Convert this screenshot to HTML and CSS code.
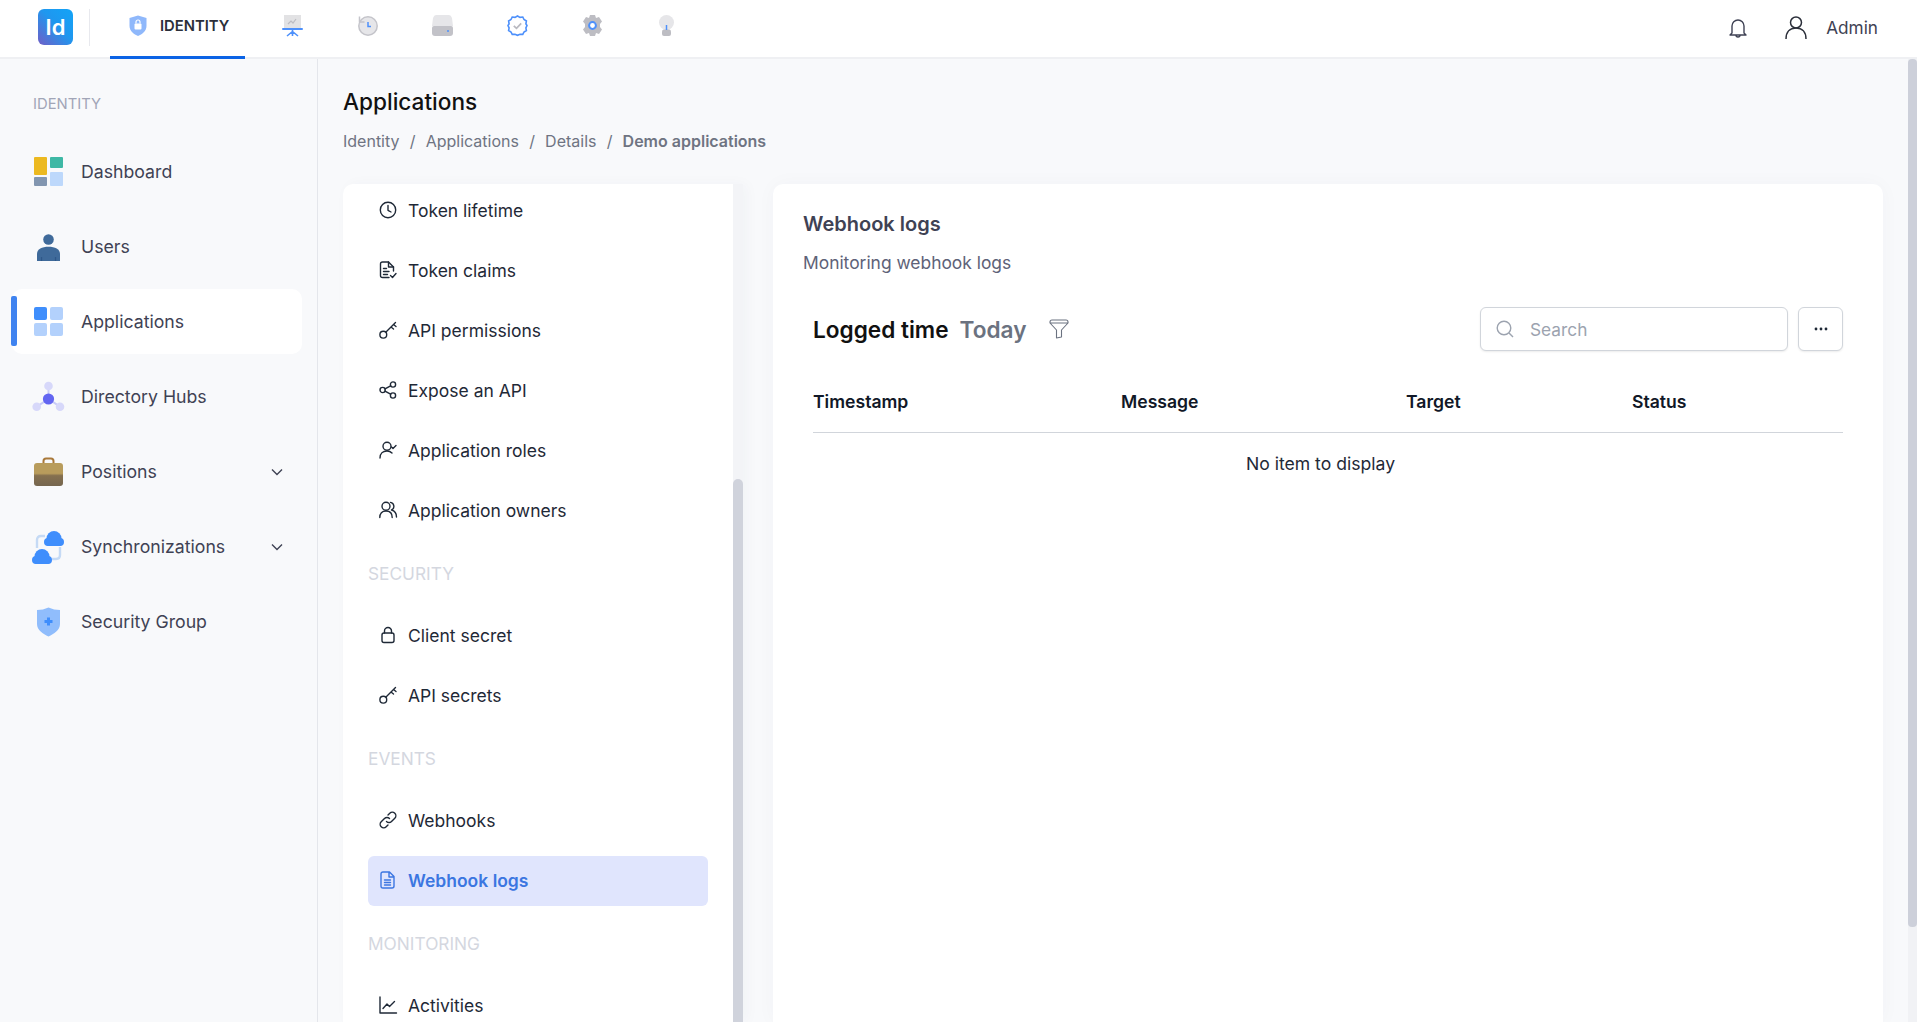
FILE: index.html
```html
<!DOCTYPE html>
<html lang="en">
<head>
<meta charset="utf-8">
<title>Applications</title>
<link rel="stylesheet" href="styles.css">
</head>
<body>
<div class="app">
  <header class="topbar">
    <div class="logo">Id</div>
    <div class="top-divider"></div>
    <a class="tab">
      <svg class="tab-shield" viewBox="0 0 18 21"><path d="M9 0.5 L17.5 3 V11 C17.5 16 13 19.5 9 21 C5 19.5 0.5 16 0.5 11 V3 Z" fill="#8fb8fb"/><rect x="5.5" y="8.5" width="7" height="6" rx="1" fill="#fff"/><path d="M7 8.5 V7 a2 2 0 0 1 4 0 V8.5" fill="none" stroke="#fff" stroke-width="1.2"/></svg>
      <span>IDENTITY</span>
    </a>
    <nav class="top-icons">
      <svg class="top-icon" viewBox="0 0 21 21"><rect x="2" y="0" width="17" height="13" fill="#e2e2e4"/><path d="M6 9 L9 6 L11 8 L14 4" fill="none" stroke="#bcbcc2" stroke-width="1.2"/><rect x="0" y="13" width="21" height="2" rx="1" fill="#4d90fb"/><path d="M10.5 15 V21 M10.5 16.5 L5 21 M10.5 16.5 L16 21" stroke="#4d90fb" stroke-width="1.6" fill="none"/></svg>
      <svg class="top-icon" viewBox="0 0 21 21"><circle cx="11" cy="11" r="9.2" fill="#e6e6e9" stroke="#c4c4ca" stroke-width="1.5"/><path d="M2.5 7 V1.5 M2.5 7 H7.5" stroke="#c4c4ca" stroke-width="1.5" fill="none"/><path d="M11 7 V11.5 H14" stroke="#4d90fb" stroke-width="1.5" fill="none"/></svg>
      <svg class="top-icon" viewBox="0 0 21 21"><path d="M4 0 H17 Q19 0 20 3 L21 11 H0 L1 3 Q2 0 4 0 Z" fill="#e6e6e9"/><path d="M0 13 Q0 11 2 11 H19 Q21 11 21 13 V18 Q21 21 18 21 H3 Q0 21 0 18 Z" fill="#c2c2c8"/><circle cx="16" cy="16" r="1" fill="#4d90fb"/></svg>
      <svg class="top-icon" viewBox="0 0 21 21"><path d="M10.5 1 L13 2.4 L15.8 2 L17 4.5 L19.4 6 L18.9 8.8 L20 10.5 L18.9 12.9 L19.4 15.5 L17 17 L15.8 19.4 L13 19.2 L10.5 20.3 L8 19.2 L5.2 19.4 L4 17 L1.6 15.5 L2.1 12.9 L1 10.5 L2.1 8.8 L1.6 6 L4 4.5 L5.2 2 L8 2.4 Z" fill="#fff" stroke="#4d90fb" stroke-width="1.6"/><path d="M6.8 10.8 L9.5 13.4 L14.2 8.4" fill="none" stroke="#b9b9c0" stroke-width="1.7"/></svg>
      <svg class="top-icon" viewBox="0 0 21 21"><path d="M8 0 H13 L14 3 L17 2 L20 6.5 L18 9 V12 L20 14.5 L17 19 L14 18 L13 21 H8 L7 18 L4 19 L1 14.5 L3 12 V9 L1 6.5 L4 2 L7 3 Z" fill="#bdbdc3"/><circle cx="10.5" cy="10.5" r="3.4" fill="#fff" stroke="#4d90fb" stroke-width="2"/></svg>
      <svg class="top-icon bulb" viewBox="0 0 17 21"><circle cx="8.5" cy="7.5" r="7.5" fill="#e6e6e9"/><rect x="4" y="14.5" width="9" height="6.5" rx="2" fill="#bdbdc3"/><path d="M8.5 10 V15" stroke="#4d90fb" stroke-width="1.5"/></svg>
    </nav>
    <div class="top-right">
      <svg class="bell" viewBox="0 0 20 22"><path d="M4 16 V9 a6 6 0 0 1 12 0 V16 L18 18 H2 Z" fill="none" stroke="#3f4254" stroke-width="1.4" stroke-linejoin="round"/><path d="M8 18 a2 2 0 0 0 4 0" fill="none" stroke="#3f4254" stroke-width="1.4"/></svg>
      <svg class="user" viewBox="0 0 22 23"><circle cx="11" cy="6.5" r="5.5" fill="none" stroke="#2b2f3a" stroke-width="1.5"/><path d="M1 23 C1 16 5 12 11 12 C17 12 21 16 21 23" fill="none" stroke="#2b2f3a" stroke-width="1.5"/></svg>
      <span class="admin">Admin</span>
    </div>
  </header>

  <div class="body">
    <aside class="sidebar">
      <div class="side-label">IDENTITY</div>
      <a class="side-row">
        <svg class="side-icon" viewBox="0 0 30 30"><rect x="0" y="0" width="13" height="18" rx="1" fill="#ecb920"/><rect x="16" y="0" width="13" height="11" rx="1" fill="#3eb8a5"/><rect x="0" y="20" width="13" height="9" rx="1" fill="#8296b0"/><rect x="16" y="15" width="13" height="14" rx="1" fill="#bdd8fb"/></svg>
        <span>Dashboard</span>
      </a>
      <a class="side-row">
        <svg class="side-icon" viewBox="0 0 30 30"><circle cx="14.5" cy="7.5" r="5.3" fill="#3f6a9a"/><path d="M3 29 V22 C3 17 8 14.7 14.5 14.7 C21 14.7 26 17 26 22 V29 Z" fill="#3f6a9a"/><path d="M7.5 25 V29 M21.5 25 V29" stroke="#2f5789" stroke-width="1.2"/></svg>
        <span>Users</span>
      </a>
      <a class="side-row active">
        <span class="side-marker"></span>
        <svg class="side-icon" viewBox="0 0 30 30"><rect x="0" y="0" width="13" height="13" rx="2" fill="#3f8efc"/><rect x="16" y="0" width="13" height="13" rx="2" fill="#b3d1fc"/><rect x="0" y="16" width="13" height="13" rx="2" fill="#b3d1fc"/><rect x="16" y="16" width="13" height="13" rx="2" fill="#b3d1fc"/></svg>
        <span>Applications</span>
      </a>
      <a class="side-row">
        <svg class="side-icon" viewBox="0 0 30 30"><path d="M14.5 4 V17 L2.7 24.7 M14.5 17 L26 24.7" stroke="#c8cbf8" stroke-width="2" fill="none"/><circle cx="14.5" cy="4" r="4.3" fill="#d7d8fa"/><circle cx="2.7" cy="24.7" r="4.3" fill="#d7d8fa"/><circle cx="26" cy="24.7" r="4.3" fill="#d7d8fa"/><circle cx="14.5" cy="17" r="5.6" fill="#6366f1"/></svg>
        <span>Directory Hubs</span>
      </a>
      <a class="side-row">
        <svg class="side-icon" viewBox="0 0 30 30"><defs><linearGradient id="bag" x1="0" y1="0" x2="0" y2="1"><stop offset="0.45" stop-color="#b89c5c"/><stop offset="0.55" stop-color="#85704f"/><stop offset="1" stop-color="#75664f"/></linearGradient></defs><path d="M9.5 7 V4 Q9.5 1.5 12 1.5 H17 Q19.5 1.5 19.5 4 V7" fill="none" stroke="#a9793a" stroke-width="2"/><rect x="0" y="6" width="29" height="23" rx="3" fill="url(#bag)"/></svg>
        <span>Positions</span>
        <svg class="chevron" viewBox="0 0 12 8"><path d="M1 1.5 L6 6.5 L11 1.5" fill="none" stroke="#3f4254" stroke-width="1.4"/></svg>
      </a>
      <a class="side-row">
        <svg class="side-icon sync" viewBox="0 0 34 34"><path d="M5 18 V10 Q5 6 9 6 H13 M28 17 V25 Q28 29 24 29 H20" fill="none" stroke="#c5daf5" stroke-width="2.4"/><g fill="#3f8efc"><circle cx="22" cy="8.5" r="7.5"/><circle cx="16" cy="12" r="4"/><circle cx="28" cy="12" r="4"/><rect x="14" y="10" width="16" height="6" rx="3"/><circle cx="10" cy="26.5" r="7.5"/><circle cx="4" cy="30" r="4"/><circle cx="16" cy="30" r="4"/><rect x="2" y="28" width="16" height="6" rx="3"/></g></svg>
        <span>Synchronizations</span>
        <svg class="chevron" viewBox="0 0 12 8"><path d="M1 1.5 L6 6.5 L11 1.5" fill="none" stroke="#3f4254" stroke-width="1.4"/></svg>
      </a>
      <a class="side-row">
        <svg class="side-icon" viewBox="0 0 30 30"><path d="M14.5 0.5 Q20 3 26 3 V17 C26 23 20 27 14.5 29.5 C9 27 3 23 3 17 V3 Q9 3 14.5 0.5 Z" fill="#90bdfc"/><path d="M14.5 10.5 V18.5 M10.5 14.5 H18.5" stroke="#3f8efc" stroke-width="3"/></svg>
        <span>Security Group</span>
      </a>
    </aside>

    <main class="content">
      <h1 class="page-title">Applications</h1>
      <div class="crumbs">
        <span>Identity</span><i>/</i><span>Applications</span><i>/</i><span>Details</span><i>/</i><b>Demo applications</b>
      </div>
      <div class="cards">
        <section class="menu-card">
          <div class="menu">
            <a class="menu-row">
              <svg class="mi" viewBox="0 0 18 18"><circle cx="9" cy="9" r="7.7"/><path d="M9 4.5 V9.3 L12 11"/></svg>
              <span>Token lifetime</span>
            </a>
            <a class="menu-row">
              <svg class="mi" viewBox="0 0 18 18"><path d="M10 16.5 H3.5 Q1.5 16.5 1.5 14.5 V3 Q1.5 1 3.5 1 H9.5 L14.5 6 V10"/><path d="M9.5 1 V6 H14.5 M4.5 7.5 H7.5 M4.5 10.5 H10 M4.5 13.5 H8.5 M11.5 14.5 L13.5 16.5 L17 12.5"/></svg>
              <span>Token claims</span>
            </a>
            <a class="menu-row">
              <svg class="mi" viewBox="0 0 18 18"><circle cx="4.3" cy="13.7" r="3.4"/><path d="M7 11 L16.5 1.5 M12 6 L14.5 8 M14.5 3.5 L17 5.5"/></svg>
              <span>API permissions</span>
            </a>
            <a class="menu-row">
              <svg class="mi" viewBox="0 0 18 18"><circle cx="3.6" cy="9" r="2.6"/><circle cx="14" cy="3.5" r="2.6"/><circle cx="14" cy="14.5" r="2.6"/><path d="M6 7.8 L11.6 4.8 M6 10.2 L11.6 13.2"/></svg>
              <span>Expose an API</span>
            </a>
            <a class="menu-row">
              <svg class="mi" viewBox="0 0 18 18"><circle cx="8" cy="5.2" r="4"/><path d="M1 17 C1 12.5 4 10 8 10 C10 10 11.5 10.5 13 12 M12.5 6 L14 7.5 L17 4.5"/></svg>
              <span>Application roles</span>
            </a>
            <a class="menu-row">
              <svg class="mi" viewBox="0 0 18 18"><circle cx="7" cy="5.2" r="4"/><path d="M0.8 16.5 C0.8 12.5 3 10 7 10 C11 10 13.2 12.5 13.2 16.5 M11.5 1.4 A4 4 0 0 1 12.5 9 C15.5 9.8 17.5 12 17.5 16"/></svg>
              <span>Application owners</span>
            </a>
            <div class="menu-section">SECURITY</div>
            <a class="menu-row">
              <svg class="mi" viewBox="0 0 18 18"><rect x="3" y="7" width="12" height="9.5" rx="2"/><path d="M5.5 7 V5 a3.5 3.5 0 0 1 7 0 V7"/></svg>
              <span>Client secret</span>
            </a>
            <a class="menu-row">
              <svg class="mi" viewBox="0 0 18 18"><circle cx="4.3" cy="13.7" r="3.4"/><path d="M7 11 L16.5 1.5 M12 6 L14.5 8 M14.5 3.5 L17 5.5"/></svg>
              <span>API secrets</span>
            </a>
            <div class="menu-section">EVENTS</div>
            <a class="menu-row">
              <svg class="mi" viewBox="0 0 18 18"><path d="M7.5 10.5 a3.5 3.5 0 0 0 5 0 L15.8 7.2 a3.5 3.5 0 0 0 -5 -5 L9 4"/><path d="M10.5 7.5 a3.5 3.5 0 0 0 -5 0 L2.2 10.8 a3.5 3.5 0 0 0 5 5 L9 14"/></svg>
              <span>Webhooks</span>
            </a>
            <a class="menu-row current">
              <svg class="mi" viewBox="0 0 18 18"><path d="M4 1 H10.5 L15 5.5 V15 Q15 17 13 17 H4 Q2 17 2 15 V3 Q2 1 4 1 Z M10 1 V6 H15 M5.5 9 H11.5 M5.5 11.5 H11.5 M5.5 14 H11.5"/></svg>
              <span>Webhook logs</span>
            </a>
            <div class="menu-section">MONITORING</div>
            <a class="menu-row">
              <svg class="mi" viewBox="0 0 18 18"><path d="M1 1 V17 H17.5 M4 12.5 L8 8 L10.5 10.5 L15.5 5.5"/></svg>
              <span>Activities</span>
            </a>
          </div>
          <div class="menu-track"><div class="menu-thumb"></div></div>
        </section>

        <section class="log-card">
          <h2 class="log-title">Webhook logs</h2>
          <p class="log-sub">Monitoring webhook logs</p>
          <div class="log-body">
            <div class="toolbar">
              <strong class="logged">Logged time</strong>
              <span class="today">Today</span>
              <svg class="filter" viewBox="0 0 20 20"><path d="M1 3 Q1 1 3 1 H17 Q19 1 19 3 V4 L12.5 11 V18 L7.5 19 V11 L1 4 Z M1 4 H19" fill="none" stroke="#6b7280" stroke-width="1.1" stroke-linejoin="round"/></svg>
              <label class="search">
                <svg class="search-icon" viewBox="0 0 18 18"><circle cx="8" cy="8" r="6.8" fill="none" stroke="#9ca3af" stroke-width="1.4"/><path d="M13 13 L17 17" stroke="#9ca3af" stroke-width="1.4"/></svg>
                <span>Search</span>
              </label>
              <button class="more"><svg class="dots" viewBox="0 0 14 4"><circle cx="2" cy="2" r="1.4"/><circle cx="7" cy="2" r="1.4"/><circle cx="12" cy="2" r="1.4"/></svg></button>
            </div>
            <div class="log-head">
              <span>Timestamp</span><span>Message</span><span>Target</span><span>Status</span>
            </div>
            <div class="log-empty">No item to display</div>
          </div>
        </section>
      </div>
    </main>
    <div class="page-track"><div class="page-thumb"></div></div>
  </div>
</div>
</body>
</html>
```
FILE: styles.css
```css
* { box-sizing: border-box; }
html, body { margin: 0; height: 100%; overflow: hidden; }
body { font-family: Inter, "Liberation Sans", sans-serif; font-size: 16px; color: #3f4254; background: #f8f9fb; }
svg { display: block; flex: none; overflow: visible; }
.app { display: flex; flex-direction: column; height: 100vh; }

.topbar { display: flex; align-items: flex-start; height: 59px; flex: none; background: #fff; border-bottom: 2px solid #eff0f3; padding-left: 38px; }
.logo { width: 35px; height: 36px; margin-top: 9px; border-radius: 6px; background: linear-gradient(45deg, #6f5fc7 0%, #1f97ef 55%, #12a4f7 100%); color: #fff; font-size: 22px; font-weight: 600; line-height: 36px; text-align: center; }
.top-divider { width: 1px; height: 37px; margin: 9px 20px 0 16px; background: #e8e9ee; }
.tab { display: flex; align-items: flex-start; gap: 13px; width: 135px; height: 59px; padding: 15px 0 0 19px; border-bottom: 3px solid #0b63e5; font-size: 14.8px; font-weight: 600; color: #2b2f3a; }
.tab span { margin-top: 1px; line-height: 21px; }
.tab-shield { width: 18px; height: 21px; }
.top-icons { display: flex; gap: 54px; margin: 15px 0 0 37px; }
.top-icon { width: 21px; height: 21px; }
.top-icon.bulb { width: 17px; margin-left: 1px; }
.top-right { display: flex; align-items: center; margin-left: auto; padding: 16px 39px 0 0; }
.bell { width: 20px; height: 22px; }
.user { width: 22px; height: 23px; margin-left: 37px; }
.admin { margin-left: 19px; font-size: 17.2px; line-height: 23px; color: #3f4254; }

.body { display: flex; flex: 1; min-height: 0; }
.sidebar { width: 318px; flex: none; padding: 35px 0 0 12px; border-right: 1px solid #e4e6eb; background: #f8f9fb; }
.side-label { margin: 0 0 25px 21px; font-size: 14.8px; line-height: 20px; color: #a1a5b7; }
.side-row { position: relative; display: flex; align-items: center; gap: 17px; width: 290px; height: 65px; margin-bottom: 10px; padding: 0 19px 0 22px; border-radius: 10px; font-size: 17.7px; color: #3f4254; }
.side-row.active { background: #fff; }
.side-marker { position: absolute; left: -1px; top: 7px; width: 6px; height: 50px; border-radius: 2px; background: #3f83f0; }
.side-icon { width: 30px; height: 30px; }
.side-icon.sync { width: 34px; height: 34px; margin: -2px; }
.chevron { width: 12px; height: 8px; margin-left: auto; }

.content { flex: 1; min-width: 0; display: flex; flex-direction: column; padding: 28px 25px 0 25px; }
.page-title { margin: 0; font-size: 22.6px; font-weight: 500; line-height: 30px; color: #111; }
.crumbs { display: flex; margin-top: 13px; font-size: 16px; line-height: 22px; color: #6f7482; }
.crumbs i { font-style: normal; margin: 0 10.2px; }
.crumbs b { font-weight: 600; }
.cards { display: flex; gap: 30px; flex: 1; min-height: 0; margin-top: 32px; }

.menu-card { display: flex; width: 400px; flex: none; background: #fff; border-radius: 10px 0 0 0; box-shadow: 4px 0 14px rgba(40,50,80,.03); overflow: hidden; }
.menu { flex: 1; min-width: 0; padding: 2px 25px 0; overflow: hidden; }
.menu-row { display: flex; align-items: center; gap: 11px; height: 50px; margin-bottom: 10px; padding: 0 0 2px 11px; border-radius: 6px; font-size: 17.5px; color: #1f2937; }
.menu-row.current { background: #e0e5fd; color: #3b76e1; font-weight: 600; }
.menu-section { display: flex; align-items: center; height: 55px; margin-bottom: 10px; font-size: 17.3px; color: #d4d7df; }
.mi { width: 18px; height: 18px; fill: none; stroke: #1f2937; stroke-width: 1.4; stroke-linejoin: round; stroke-linecap: round; }
.current .mi { stroke: #3b76e1; }
.menu-track { width: 10px; flex: none; padding-top: 295px; background: #f3f4f7; }
.menu-thumb { height: 100%; background: #d0d3dc; border-radius: 5px 5px 0 0; }

.log-card { flex: 1; min-width: 0; padding: 27px 40px 0 30px; background: #fff; border-radius: 10px 10px 0 0; box-shadow: 0 0 20px rgba(40,50,80,.03); }
.log-title { margin: 0; font-size: 20px; font-weight: 600; line-height: 26px; color: #3f4254; }
.log-sub { margin: 14px 0 0; font-size: 17.4px; line-height: 24px; color: #5e6278; }
.log-body { margin: 32px 0 0 10px; }
.toolbar { display: flex; align-items: center; height: 44px; }
.logged { font-size: 22.6px; font-weight: 600; color: #111; }
.today { margin-left: 11px; font-size: 22.6px; font-weight: 600; color: #6b7280; }
.filter { width: 20px; height: 20px; margin-left: 23px; }
.search { display: flex; align-items: center; gap: 16px; width: 308px; height: 44px; margin-left: auto; padding-left: 15px; background: #fff; border: 1px solid #d1d5db; border-radius: 6px; box-shadow: 0 1px 2px rgba(0,0,0,.08); font-size: 17.3px; color: #9ca3af; }
.search-icon { width: 18px; height: 18px; }
.more { display: flex; align-items: center; justify-content: center; width: 45px; height: 44px; margin: 0 0 0 10px; padding: 0; background: #fff; border: 1px solid #d1d5db; border-radius: 6px; box-shadow: 0 1px 2px rgba(0,0,0,.08); }
.dots { width: 14px; height: 4px; fill: #1f2937; }
.log-head { display: grid; grid-template-columns: 308px 285px 226px 1fr; align-items: center; height: 62px; margin-top: 20px; border-bottom: 1px solid #d1d5db; font-size: 17.6px; font-weight: 600; color: #111827; }
.log-empty { height: 61px; padding-right: 15px; line-height: 61px; text-align: center; font-size: 17.6px; color: #1f2937; }

.page-track { width: 9px; flex: none; background: #f1f2f5; }
.page-thumb { height: 868px; background: #cdd0da; border-radius: 4px; }
```
